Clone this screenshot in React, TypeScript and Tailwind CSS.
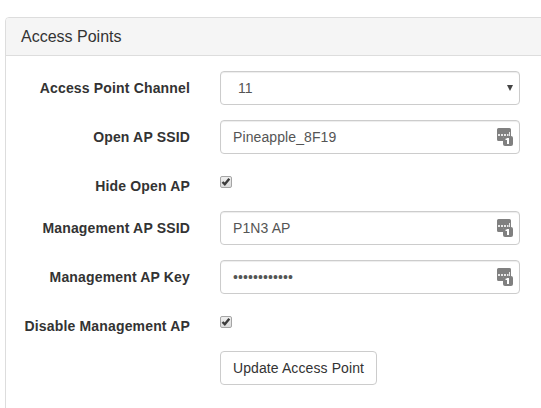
import type { ReactNode } from "react";

function Row({ label, short, children }: { label?: string; short?: boolean; children: ReactNode }) {
  return (
    <div className={`flex ${short ? "h-[27px]" : "h-[34px]"}`}>
      <div className="mr-[30px] w-[184px] shrink-0 whitespace-nowrap pt-[7px] text-right font-bold leading-5 tracking-[0.16px] text-[#333]">
        {label}
      </div>
      {children}
    </div>
  );
}

const field =
  "h-[34px] w-[300px] rounded border border-[#ccc] bg-white py-1.5 text-[14px] leading-5 text-[#555] shadow-[inset_0_1px_1px_rgba(0,0,0,0.075)] outline-none";

function KeyIcon() {
  return (
    <svg className="pointer-events-none absolute right-[7px] top-2 h-[18px] w-4" viewBox="0 0 16 18">
      <path d="M1.5 0h11A1.5 1.5 0 0 1 14 1.5V9H6v4H1.5A1.5 1.5 0 0 1 0 11.500V1.500A1.500 1.500 0 0 1 1.500 0z" fill="#808080" />
      <path d="M1 6h2v2H1zM4 6h2v2H4zM7 6h2v2H7zM10 6h1.500v2H10zM12 4h1v4h-1z" fill="#e8e8e8" />
      <rect x="6" y="8" width="10" height="10" rx="2" fill="#808080" />
      <path d="M10.200 10H12v6h-2v-4H8.500v-1.200Q9.800 10.800 10.200 10z" fill="#fff" />
    </svg>
  );
}

function Field({ value, password }: { value: string; password?: boolean }) {
  return (
    <div className="relative">
      <input
        type={password ? "password" : "text"}
        defaultValue={value}
        className={`${field} px-3 tracking-[0.1px]`}
      />
      <KeyIcon />
    </div>
  );
}

function Checkbox() {
  return (
    <label className="relative mt-[7px] block h-[13px] w-[13px]">
      <input
        type="checkbox"
        defaultChecked
        className="block h-3 w-3 appearance-none rounded-[2px] border border-[#a5a5a5] bg-linear-to-b from-[#eee] to-[#dcdcdc]"
      />
      <svg className="absolute left-0 top-0 h-3 w-3" viewBox="0 0 12 12">
        <path d="M2.500 6 4.800 8.300 9.300 2.700" fill="none" stroke="#3c3c3c" strokeWidth="2.400" />
      </svg>
    </label>
  );
}

export default function App() {
  return (
    <div className="h-[408px] overflow-hidden bg-white pl-[5px] pt-[17px] font-['Liberation_Sans',Arial,sans-serif] text-[14px] text-[#333]">
      <section className="h-[420px] w-[560px] rounded border border-[#ddd] bg-white">
        <h3 className="h-[38px] rounded-t-[3px] border-b border-[#ddd] bg-[#f5f5f5] px-[15px] pt-[10px] text-[16px] leading-[18px]">
          Access Points
        </h3>
        <form className="flex flex-col gap-[15px] pt-[15px]">
          <Row label="Access Point Channel">
            <div className="relative">
              <select className={`${field} appearance-none pl-[17px] pr-3`}>
                <option>11</option>
              </select>
              <svg className="pointer-events-none absolute right-[7px] top-[14px] h-[6px] w-[6px]" viewBox="0 0 6 6">
                <path d="M0 0h6L3 6z" fill="#444" />
              </svg>
            </div>
          </Row>
          <Row label="Open AP SSID">
            <Field value="Pineapple_8F19" />
          </Row>
          <Row label="Hide Open AP" short>
            <Checkbox />
          </Row>
          <Row label="Management AP SSID">
            <Field value="P1N3 AP" />
          </Row>
          <Row label="Management AP Key">
            <Field value="abcdefghijkl" password />
          </Row>
          <Row label="Disable Management AP" short>
            <Checkbox />
          </Row>
          <Row>
            <button type="button" className="h-[34px] w-[157px] whitespace-nowrap rounded border border-[#ccc] bg-white text-center leading-5 tracking-[0.1px]">
              Update Access Point
            </button>
          </Row>
        </form>
      </section>
    </div>
  );
}
